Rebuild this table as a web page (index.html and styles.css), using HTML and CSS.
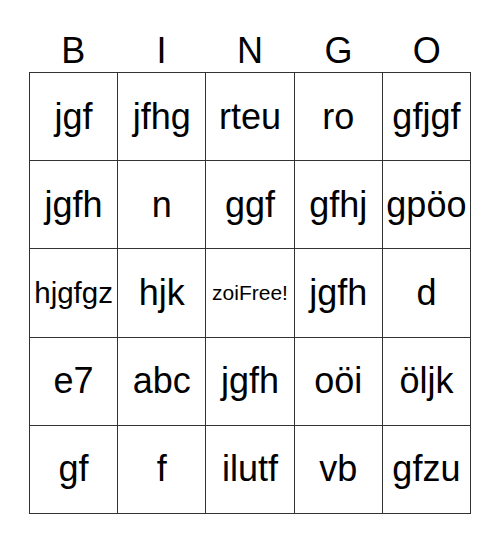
FILE: index.html
```html
<!DOCTYPE html>
<html>
<head>
<meta charset="utf-8">
<link rel="stylesheet" href="styles.css">
</head>
<body>
<div class="card">
  <div class="head">
    <div>B</div><div>I</div><div>N</div><div>G</div><div>O</div>
  </div>
  <div class="grid">
    <div class="cell">jgf</div>
    <div class="cell">jfhg</div>
    <div class="cell">rteu</div>
    <div class="cell">ro</div>
    <div class="cell">gfjgf</div>
    <div class="cell">jgfh</div>
    <div class="cell">n</div>
    <div class="cell">ggf</div>
    <div class="cell">gfhj</div>
    <div class="cell">gpöo</div>
    <div class="cell sm">hjgfgz</div>
    <div class="cell">hjk</div>
    <div class="cell xs">zoiFree!</div>
    <div class="cell">jgfh</div>
    <div class="cell">d</div>
    <div class="cell">e7</div>
    <div class="cell">abc</div>
    <div class="cell">jgfh</div>
    <div class="cell">oöi</div>
    <div class="cell">öljk</div>
    <div class="cell">gf</div>
    <div class="cell">f</div>
    <div class="cell">ilutf</div>
    <div class="cell">vb</div>
    <div class="cell">gfzu</div>
  </div>
</div>
</body>
</html>
```
FILE: styles.css
```css
html, body {
  margin: 0;
  padding: 0;
  background: #fff;
}
body {
  font-family: "Liberation Sans", Arial, sans-serif;
  color: #000;
}
.card {
  width: 442px;
  margin-left: 29px;
}
.head {
  display: grid;
  grid-template-columns: repeat(5, 1fr);
  padding-top: 30px;
  box-sizing: border-box;
  font-size: 36px;
  line-height: 42px;
  text-align: center;
  height: 72px;
}
.grid {
  display: grid;
  grid-template-columns: repeat(5, 1fr);
  grid-auto-rows: 88.2px;
  border-left: 1px solid #333;
  border-top: 1px solid #333;
}
.cell {
  border-right: 1px solid #333;
  border-bottom: 1px solid #333;
  display: flex;
  align-items: center;
  justify-content: center;
  font-size: 36px;
  white-space: nowrap;
  overflow: hidden;
}
.cell.sm {
  font-size: 29.5px;
}
.cell.xs {
  font-size: 21px;
}
```
